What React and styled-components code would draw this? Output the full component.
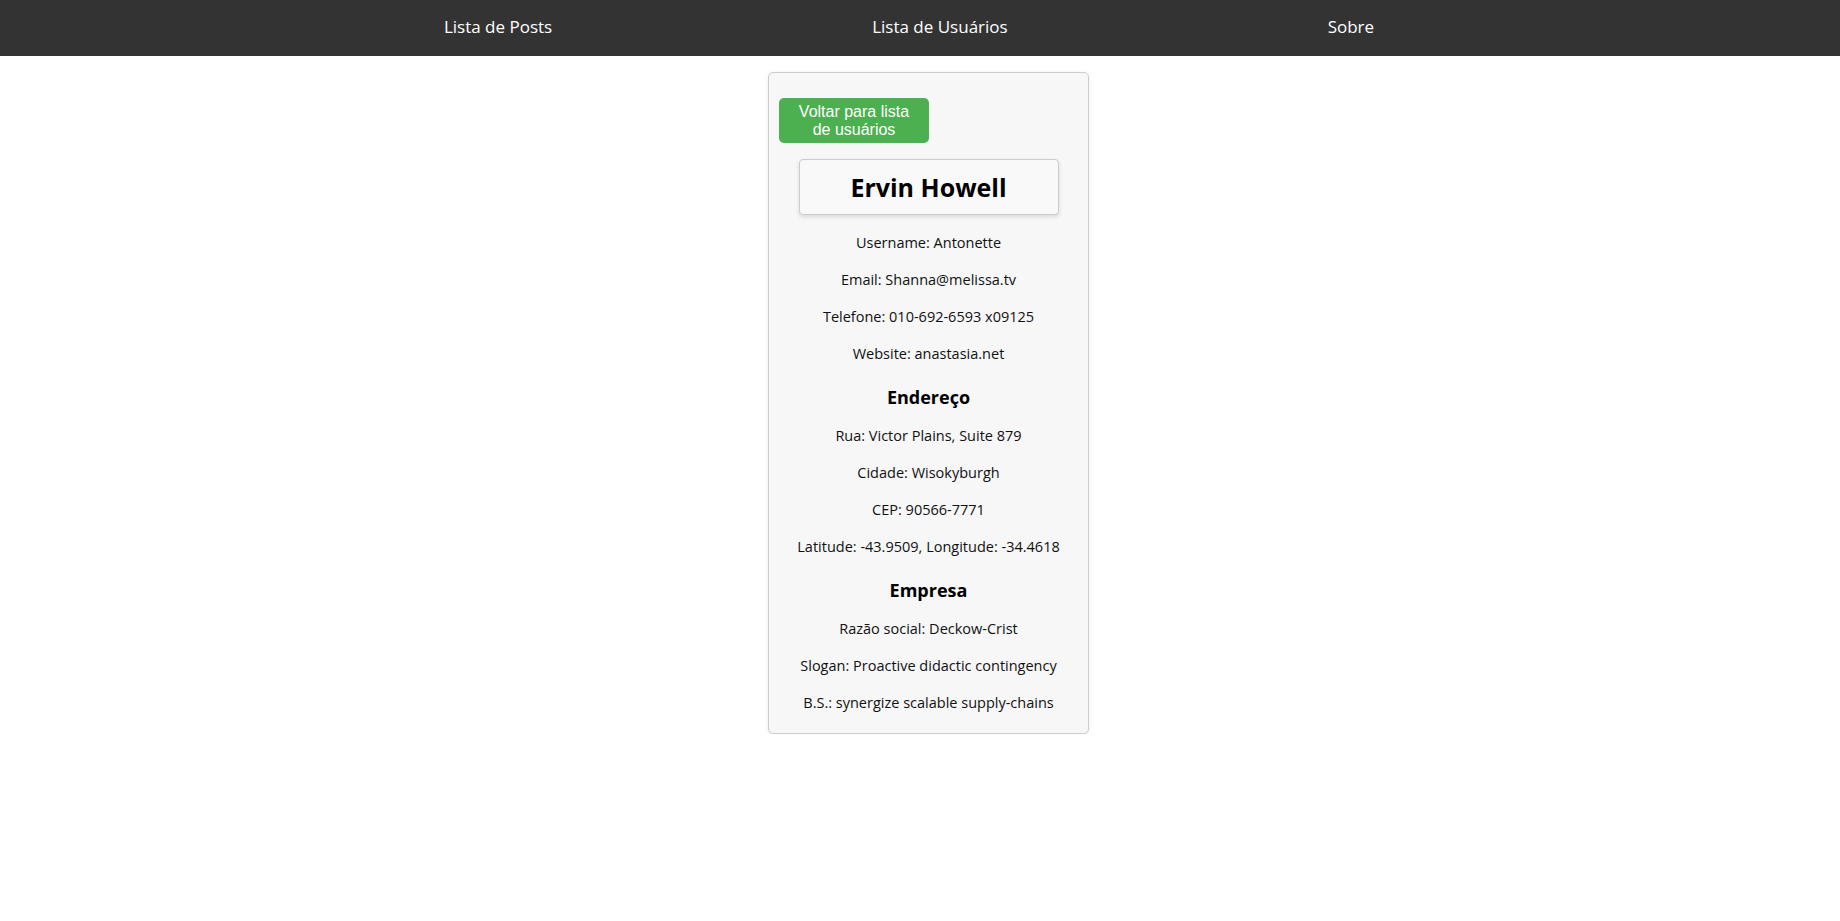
import React from 'react'
import styled, { createGlobalStyle } from 'styled-components'

const GlobalStyle = createGlobalStyle`
    body {
        margin: 0;
        background-color: white;
        font-family: "Open Sans", "Noto Sans", sans-serif;
    }
`

const Nav = styled.nav`
    height: 56px;
    box-sizing: border-box;
    padding: 0 22px 4px 0;
    background-color: #333;
    display: flex;
    align-items: center;
    justify-content: center;
    gap: 320px;
`

const NavLink = styled.a`
    color: white;
    font-size: 17px;
    text-decoration: none;
    cursor: pointer;
`

const Main = styled.main`
    padding-left: 17px;
`

const Card = styled.div`
    width: 321px;
    box-sizing: border-box;
    margin: 16px auto 0;
    padding: 10px;
    background-color: #f7f7f7;
    border: 1px solid #ccc;
    border-radius: 5px;
    box-shadow: 0 1px 4px rgba(0, 0, 0, 0.08);
    text-align: center;
`

const BackButton = styled.button`
    display: block;
    width: 150px;
    height: 45px;
    margin-top: 15px;
    padding: 0 14px;
    background-color: #4caf50;
    color: white;
    border: none;
    border-radius: 5px;
    font-family: "Liberation Sans", Arial, sans-serif;
    font-size: 16px;
    line-height: 18px;
    cursor: pointer;
`

const Name = styled.h2`
    width: 260px;
    box-sizing: border-box;
    margin: 16px auto 17px;
    padding: 10px 0;
    font-size: 25px;
    line-height: 34px;
    color: #000;
    background-color: #f9f9f9;
    border: 1px solid #ccc;
    border-radius: 4px;
    box-shadow: 0 2px 4px rgba(0, 0, 0, 0.12);
`

const Section = styled.h3`
    margin: 21px 0 16px;
    font-size: 18px;
    line-height: 24px;
    color: #000;
`

const Info = styled.p`
    margin: 16px 0;
    font-size: 14.5px;
    line-height: 21px;
    color: #111;
    &:last-child {
        margin-bottom: 10px;
    }
`

const user = {
    name: 'Ervin Howell',
    username: 'Antonette',
    email: 'Shanna@melissa.tv',
    phone: '010-692-6593 x09125',
    website: 'anastasia.net',
    address: {
        street: 'Victor Plains',
        suite: 'Suite 879',
        city: 'Wisokyburgh',
        zipcode: '90566-7771',
        geo: { lat: '-43.9509', lng: '-34.4618' },
    },
    company: {
        name: 'Deckow-Crist',
        catchPhrase: 'Proactive didactic contingency',
        bs: 'synergize scalable supply-chains',
    },
}

const App = () => {
    const { address, company } = user
    return (
        <>
            <GlobalStyle />
            <Nav>
                <NavLink>Lista de Posts</NavLink>
                <NavLink>Lista de Usuários</NavLink>
                <NavLink>Sobre</NavLink>
            </Nav>
            <Main>
                <Card>
                    <BackButton>Voltar para lista de usuários</BackButton>
                    <Name>{user.name}</Name>
                    <Info>Username: {user.username}</Info>
                    <Info>Email: {user.email}</Info>
                    <Info>Telefone: {user.phone}</Info>
                    <Info>Website: {user.website}</Info>
                    <Section>Endereço</Section>
                    <Info>Rua: {address.street}, {address.suite}</Info>
                    <Info>Cidade: {address.city}</Info>
                    <Info>CEP: {address.zipcode}</Info>
                    <Info>Latitude: {address.geo.lat}, Longitude: {address.geo.lng}</Info>
                    <Section>Empresa</Section>
                    <Info>Razão social: {company.name}</Info>
                    <Info>Slogan: {company.catchPhrase}</Info>
                    <Info>B.S.: {company.bs}</Info>
                </Card>
            </Main>
        </>
    )
}

export default App
